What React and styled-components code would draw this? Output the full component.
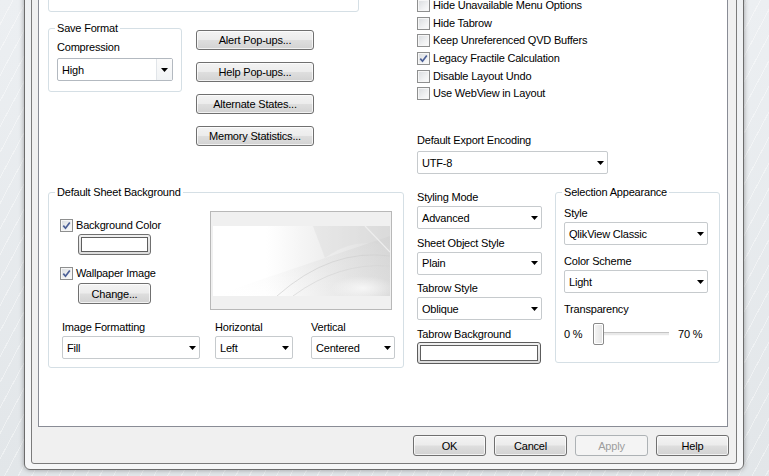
import React from 'react';
import styled, { createGlobalStyle } from 'styled-components';

const GlobalStyle = createGlobalStyle`
  html, body {
    margin: 0;
    padding: 0;
  }
  body {
    background: #e7ebee;
    font-family: 'Liberation Sans', Arial, sans-serif;
    font-size: 11px;
    letter-spacing: -0.2px;
    color: #000;
  }
`;

const Desktop = styled.div`
  width: 769px;
  height: 476px;
  overflow: hidden;
  box-sizing: border-box;
  display: flex;
  align-items: flex-end;
  padding: 0 0 6px 24px;
  background:
    repeating-linear-gradient(118deg, rgba(255, 255, 255, 0) 0 11px, rgba(255, 255, 255, 0.4) 11px 12px),
    linear-gradient(180deg, #eceff2, #e2e6e9);
`;

const Window = styled.div`
  width: 720px;
  height: 515px;
  flex-shrink: 0;
  box-sizing: border-box;
  display: flex;
  border: 1px solid #6c6c6c;
  border-radius: 0 0 6px 6px;
  padding: 6px 6px 5px 6px;
  background: linear-gradient(180deg, #eef0f2, #f6f7f8);
  box-shadow: 0 0 5px rgba(0, 0, 0, 0.35);
`;

const Client = styled.div`
  flex: 1;
  display: flex;
  flex-direction: column;
  border: 1px solid #7b7b7b;
  border-radius: 0 0 3px 3px;
  background: #f0f0f0;
  padding: 6px 7px 7px 6px;
`;

const Pane = styled.div`
  width: 690px;
  height: 458px;
  box-sizing: border-box;
  flex-shrink: 0;
  border: 1px solid #898c95;
  background: #fff;
  padding: 0 7px 0 9px;
  overflow: hidden;
`;

const Layout = styled.div`
  display: grid;
  grid-template-columns: 356px 303px;
  grid-template-rows: 215px auto;
  column-gap: 13px;
`;

const Column = styled.div`
  display: flex;
  flex-direction: column;
  align-items: flex-start;
`;

const TopBox = styled.div`
  width: 311px;
  height: 42px;
  box-sizing: border-box;
  border: 1px solid #d5dfe5;
  border-radius: 3px;
`;

const Row = styled.div`
  display: flex;
  align-items: flex-start;
`;

const Group = styled.fieldset`
  margin: 0;
  min-width: 0;
  width: ${(p) => p.$w}px;
  box-sizing: border-box;
  border: 1px solid #d5dfe5;
  border-radius: 3px;
  padding: ${(p) => p.$pad};
`;

const Legend = styled.legend`
  padding: 0 2px;
  margin-left: ${(p) => p.$ml ?? -2}px;
  line-height: 14px;
  color: #000;
`;

const Label = styled.span`
  display: block;
  line-height: 14px;
  white-space: nowrap;
`;

const Field = styled.div`
  display: flex;
  flex-direction: column;
  gap: ${(p) => p.$gap ?? 2}px;
  margin-left: ${(p) => p.$ml || 0}px;
`;

const ComboBox = styled.div`
  width: ${(p) => p.$w}px;
  height: 23px;
  box-sizing: border-box;
  display: flex;
  align-items: center;
  border: 1px solid ${(p) => (p.$split ? '#b3b9c0' : '#c6cacd')};
  border-radius: 2px;
  background: #fff;
  padding-left: 4px;
  white-space: nowrap;
`;

const ComboText = styled.span`
  flex: 1;
  line-height: 14px;
`;

const ArrowBox = styled.span`
  display: flex;
  align-items: center;
  justify-content: center;
  width: ${(p) => (p.$split ? 15 : 14)}px;
  align-self: stretch;
  border-left: ${(p) => (p.$split ? '1px solid #e1e5e9' : 'none')};
  background: ${(p) => (p.$split ? 'linear-gradient(180deg, #fbfbfb, #f1f3f5)' : 'transparent')};
`;

const Button = styled.button`
  width: ${(p) => p.$w}px;
  height: ${(p) => p.$h || 21}px;
  box-sizing: border-box;
  margin: 0;
  padding: 0;
  border: 1px solid #707070;
  border-radius: 3px;
  background: linear-gradient(180deg, #f3f3f3 0%, #ececec 48%, #dedede 52%, #d2d2d2 100%);
  box-shadow: inset 0 0 0 1px rgba(255, 255, 255, 0.7);
  font-family: 'Liberation Sans', Arial, sans-serif;
  font-size: 11px;
  letter-spacing: -0.2px;
  color: #000;
  line-height: 14px;

  &:disabled {
    border-color: #adb2b5;
    background: #f4f4f4;
    box-shadow: none;
    color: #9d9d9d;
  }
`;

const ButtonStack = styled.div`
  display: flex;
  flex-direction: column;
  gap: 12px;
  margin: 9px 0 0 14px;
`;

const CheckList = styled.div`
  display: flex;
  flex-direction: column;
  margin-top: 26.5px;
`;

const CheckItem = styled.div`
  display: flex;
  align-items: center;
  gap: 3px;
  height: ${(p) => p.$h || 13}px;
  line-height: 13px;
  white-space: nowrap;
`;

const Box = styled.span`
  width: 13px;
  height: 13px;
  flex-shrink: 0;
  box-sizing: border-box;
  border: 1px solid #8e8f8f;
  background: linear-gradient(135deg, #d8dbde 0%, #f0f1f2 60%, #fcfcfc 100%);
  box-shadow: inset 0 0 0 1px #f6f6f6;
  display: flex;
  align-items: center;
  justify-content: center;
`;

const Swatch = styled.div`
  width: ${(p) => p.$w}px;
  height: ${(p) => p.$h}px;
  box-sizing: border-box;
  border: 1px solid ${(p) => (p.$dark ? '#5c5c5c' : '#707070')};
  border-radius: 3px;
  padding: 2px;
  background: linear-gradient(180deg, #f0f0f0, #dcdcdc);
  display: flex;
`;

const SwatchColor = styled.div`
  flex: 1;
  border: 1px solid #5e5e5e;
  background: #fff;
`;

const Preview = styled.div`
  width: 182px;
  height: 99px;
  box-sizing: border-box;
  border: 1px solid #b8b8b8;
  background: #f0f0f0;
  display: flex;
  align-items: center;
  justify-content: center;
`;

const SheetLeft = styled.div`
  width: 150px;
  padding-top: 8px;
  display: flex;
  flex-direction: column;
  align-items: flex-start;
`;

const Indent = styled.div`
  margin: ${(p) => p.$mt}px 0 0 18px;
`;

const SliderRow = styled.div`
  display: flex;
  align-items: center;
  height: 22px;
  margin-top: 7px;
`;

const SliderEnd = styled.span`
  width: ${(p) => p.$w || 'auto'};
  margin-left: ${(p) => p.$ml || 0}px;
  line-height: 14px;
  white-space: nowrap;
`;

const Track = styled.div`
  position: relative;
  width: 76px;
  height: 22px;
  display: flex;
  align-items: center;

  &::before {
    content: '';
    flex: 1;
    margin-left: 5px;
    height: 2px;
    border-top: 1px solid #c4c4c4;
    background: #e9e9e9;
    border-bottom: 1px solid #fafafa;
  }
`;

const Thumb = styled.span`
  position: absolute;
  left: 0;
  top: 0;
  width: 11px;
  height: 22px;
  box-sizing: border-box;
  border: 1px solid #8a8a8a;
  border-radius: 2px;
  background: linear-gradient(90deg, #f6f6f6, #e2e2e2);
  box-shadow: inset 0 0 0 1px #fff;
`;

const ButtonBar = styled.div`
  display: flex;
  justify-content: flex-end;
  gap: 8px;
  margin-top: 8px;
`;

const Arrow = () => (
  <svg width="7" height="4" viewBox="0 0 7 4">
    <polygon points="0,0 7,0 3.5,4" fill="#000" />
  </svg>
);

const Combo = ({ value, w, split }) => (
  <ComboBox $w={w} $split={split}>
    <ComboText>{value}</ComboText>
    <ArrowBox $split={split}>
      <Arrow />
    </ArrowBox>
  </ComboBox>
);

const Check = ({ checked, label, h }) => (
  <CheckItem $h={h}>
    <Box>
      {checked && (
        <svg width="9" height="9" viewBox="0 0 9 9">
          <path d="M1.3 4.6 L3.5 7.2 L7.8 1.4" fill="none" stroke="#4b5f96" strokeWidth="1.7" />
        </svg>
      )}
    </Box>
    <span>{label}</span>
  </CheckItem>
);

const Wallpaper = () => (
  <svg width="177" height="70" viewBox="0 0 177 70">
    <defs>
      <linearGradient id="wpBase" x1="0" y1="0" x2="1" y2="0">
        <stop offset="0" stopColor="#ffffff" />
        <stop offset="0.3" stopColor="#ffffff" />
        <stop offset="1" stopColor="#dcdcdc" />
      </linearGradient>
      <linearGradient id="wpBand" x1="0" y1="1" x2="1" y2="0">
        <stop offset="0" stopColor="#ffffff" stopOpacity="0" />
        <stop offset="0.55" stopColor="#dadada" stopOpacity="0.6" />
        <stop offset="1" stopColor="#c8c8c8" stopOpacity="0.8" />
      </linearGradient>
      <radialGradient id="wpGlow" cx="0.5" cy="0.5" r="0.5">
        <stop offset="0" stopColor="#ffffff" stopOpacity="0.7" />
        <stop offset="1" stopColor="#ffffff" stopOpacity="0" />
      </radialGradient>
    </defs>
    <rect width="177" height="70" fill="url(#wpBase)" />
    <path d="M0 70 L177 10 L177 70 Z" fill="url(#wpBand)" opacity="0.45" />
    <path d="M100 0 L177 0 L177 20 Q140 10 112 32 Z" fill="#d6d6d6" opacity="0.35" />
    <path d="M152 0 L177 26" stroke="#eeeeee" strokeWidth="1.2" fill="none" />
    <path d="M64 70 Q118 22 177 30" stroke="#d0d0d0" strokeWidth="0.7" fill="none" />
    <path d="M80 70 Q126 36 177 40" stroke="#d6d6d6" strokeWidth="0.7" fill="none" />
    <ellipse cx="150" cy="62" rx="32" ry="12" fill="url(#wpGlow)" />
  </svg>
);

const App = () => (
  <>
    <GlobalStyle />
    <Desktop>
      <Window>
        <Client>
          <Pane>
            <Layout>
              <Column>
                <TopBox />
                <Row style={{ marginTop: 9 }}>
                  <Group $w={134} $pad="5px 8px 10px 8px">
                    <Legend>Save Format</Legend>
                    <Field $gap={4}>
                      <Label>Compression</Label>
                      <Combo value="High" w={116} split />
                    </Field>
                  </Group>
                  <ButtonStack>
                    <Button $w={118} $h={20}>Alert Pop-ups...</Button>
                    <Button $w={118} $h={20}>Help Pop-ups...</Button>
                    <Button $w={118} $h={20}>Alternate States...</Button>
                    <Button $w={118} $h={20}>Memory Statistics...</Button>
                  </ButtonStack>
                </Row>
              </Column>

              <Column>
                <CheckList>
                  <Check h={17.7} label="Hide Unavailable Menu Options" />
                  <Check h={17.7} label="Hide Tabrow" />
                  <Check h={17.7} label="Keep Unreferenced QVD Buffers" />
                  <Check h={17.7} checked label="Legacy Fractile Calculation" />
                  <Check h={17.7} label="Disable Layout Undo" />
                  <Check h={17.7} label="Use WebView in Layout" />
                </CheckList>
                <Field $gap={4} style={{ marginTop: 30.5 }}>
                  <Label>Default Export Encoding</Label>
                  <Combo value="UTF-8" w={191} />
                </Field>
              </Column>

              <Group $w={356} $pad="12px 8px 8px 11px">
                <Legend $ml={-5}>Default Sheet Background</Legend>
                <Row>
                  <SheetLeft>
                    <Check checked label="Background Color" />
                    <Indent $mt={2}>
                      <Swatch $w={73} $h={21}>
                        <SwatchColor />
                      </Swatch>
                    </Indent>
                    <div style={{ marginTop: 12 }}>
                      <Check checked label="Wallpaper Image" />
                    </div>
                    <Indent $mt={3}>
                      <Button $w={73}>Change...</Button>
                    </Indent>
                  </SheetLeft>
                  <Preview>
                    <Wallpaper />
                  </Preview>
                </Row>
                <Row style={{ marginTop: 10, marginLeft: 2 }}>
                  <Field>
                    <Label>Image Formatting</Label>
                    <Combo value="Fill" w={138} />
                  </Field>
                  <Field $ml={15}>
                    <Label>Horizontal</Label>
                    <Combo value="Left" w={78} />
                  </Field>
                  <Field $ml={18}>
                    <Label>Vertical</Label>
                    <Combo value="Centered" w={84} />
                  </Field>
                </Row>
              </Group>

              <Row>
                <Column style={{ width: 125, marginTop: 5, gap: 6.5 }}>
                  <Field>
                    <Label>Styling Mode</Label>
                    <Combo value="Advanced" w={125} />
                  </Field>
                  <Field>
                    <Label>Sheet Object Style</Label>
                    <Combo value="Plain" w={125} />
                  </Field>
                  <Field>
                    <Label>Tabrow Style</Label>
                    <Combo value="Oblique" w={125} />
                  </Field>
                  <Field $gap={1}>
                    <Label>Tabrow Background</Label>
                    <Swatch $w={124} $h={22} $dark>
                      <SwatchColor />
                    </Swatch>
                  </Field>
                </Column>
                <Group $w={165} $pad="7px 8px 17px 8px" style={{ marginLeft: 13 }}>
                  <Legend>Selection Appearance</Legend>
                  <Column style={{ gap: 9 }}>
                    <Field>
                      <Label>Style</Label>
                      <Combo value="QlikView Classic" w={144} />
                    </Field>
                    <Field>
                      <Label>Color Scheme</Label>
                      <Combo value="Light" w={144} />
                    </Field>
                    <Label>Transparency</Label>
                  </Column>
                  <SliderRow>
                    <SliderEnd $w="29px">0 %</SliderEnd>
                    <Track>
                      <Thumb />
                    </Track>
                    <SliderEnd $ml={9}>70 %</SliderEnd>
                  </SliderRow>
                </Group>
              </Row>
            </Layout>
          </Pane>
          <ButtonBar>
            <Button $w={73}>OK</Button>
            <Button $w={73}>Cancel</Button>
            <Button $w={73} disabled>Apply</Button>
            <Button $w={73}>Help</Button>
          </ButtonBar>
        </Client>
      </Window>
    </Desktop>
  </>
);

export default App;
